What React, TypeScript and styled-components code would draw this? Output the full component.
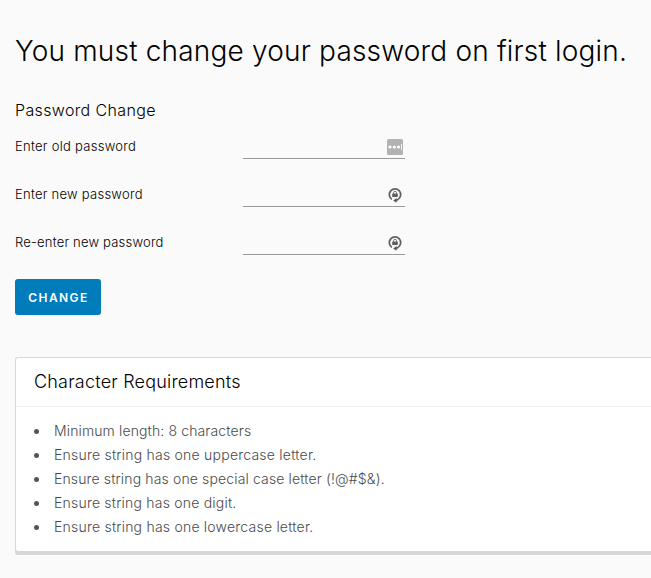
import React from "react";
import styled, { createGlobalStyle } from "styled-components";

const GlobalStyle = createGlobalStyle`
  * { box-sizing: border-box; }
  html, body { margin: 0; padding: 0; background: #fafafa; }
  body { font-family: Inter, "Liberation Sans", sans-serif; font-weight: 300; color: #000; }
`;

const Page = styled.main`
  display: flex;
  flex-direction: column;
  align-items: flex-start;
  width: 100%;
  height: 578px;
  padding: 27px 0 0 15px;
`;

const Title = styled.h1`
  margin: 0;
  font-size: 28px;
  line-height: 48px;
  font-weight: 300;
  letter-spacing: 0.19px;
  white-space: nowrap;
`;

const Form = styled.form`
  display: flex;
  flex-direction: column;
  align-items: flex-start;
  margin-top: 23px;
`;

const Legend = styled.h2`
  margin: 0 0 13px;
  font-size: 16px;
  line-height: 24px;
  font-weight: 300;
  letter-spacing: 0.36px;
`;

const Row = styled.div`
  display: flex;
  height: 24px;
  margin-bottom: 24px;
`;

const Label = styled.label<{ $tracking: number }>`
  width: 228px;
  font-size: 13px;
  line-height: 22px;
  letter-spacing: ${(p) => p.$tracking}px;
`;

const Field = styled.div`
  display: flex;
  align-items: center;
  width: 162px;
  height: 24px;
  border-bottom: 1px solid #9a9a9a;
`;

const Input = styled.input`
  flex: 1;
  min-width: 0;
  height: 22px;
  padding: 0 6px;
  border: 0;
  outline: 0;
  background: transparent;
  font: inherit;
`;

const Glyph = styled.svg`
  flex: none;
  width: 16px;
  height: 16px;
  margin-right: 2px;
`;

const Button = styled.button`
  width: 86px;
  height: 36px;
  padding: 0 0 0 1px;
  border: 0;
  border-radius: 3px;
  background: #007cbb;
  color: #fff;
  font-family: inherit;
  font-size: 12px;
  font-weight: 600;
  letter-spacing: 1.4px;
`;

const Card = styled.section`
  width: 100%;
  height: 195px;
  margin-top: 42px;
  border: 1px solid #d7d7d7;
  border-right: 0;
  border-radius: 3px 0 0 3px;
  box-shadow: 0 3px 0 #d7d7d7;
  background: #fff;
`;

const CardHeader = styled.h3`
  height: 49px;
  margin: 0;
  padding-left: 18px;
  border-bottom: 1px solid #eee;
  font-size: 18px;
  line-height: 48px;
  font-weight: 300;
  letter-spacing: 0.2px;
`;

const List = styled.ul`
  margin: 12px 0 0;
  padding: 0 0 0 18px;
  list-style: none;
`;

const Item = styled.li<{ $tracking: number }>`
  display: flex;
  align-items: center;
  height: 24px;
  font-size: 14px;
  line-height: 24px;
  letter-spacing: ${(p) => p.$tracking}px;
  color: #4a4a4a;
  &::before {
    content: "";
    width: 5px;
    height: 5px;
    margin: 1px 15px 0 0;
    border-radius: 50%;
    background: #565656;
  }
`;

const SavedIcon = () => (
  <Glyph viewBox="0 0 16 16">
    <rect width="16" height="16" rx="1.5" fill="#b2b2b2" />
    <g fill="#fff">
      <circle cx="3" cy="8" r="1.6" />
      <circle cx="7.3" cy="8" r="1.6" />
      <circle cx="11.5" cy="8" r="1.6" />
      <rect x="14" y="5" width="0.8" height="6" />
    </g>
  </Glyph>
);

const GenerateIcon = () => (
  <Glyph viewBox="0 0 16 16">
    <path d="M5 12.4A5.7 5.7 0 1 1 11 12.4L9 13.4" fill="none" stroke="#606060" strokeWidth="1.7" />
    <path d="M9.6 11V15.8L6.2 13.4Z" fill="#555" />
    <path d="M6.5 7.2V5.8a1.5 1.5 0 0 1 3 0v1.4" fill="none" stroke="#777" strokeWidth="1" />
    <rect x="5.2" y="6.6" width="5.6" height="3.4" rx="0.3" fill="#606060" />
  </Glyph>
);

const fields = [
  { id: "old", label: "Enter old password", tracking: 0.28, Icon: SavedIcon },
  { id: "new", label: "Enter new password", tracking: 0.26, Icon: GenerateIcon },
  { id: "again", label: "Re-enter new password", tracking: 0.2, Icon: GenerateIcon },
];

const requirements = [
  { text: "Minimum length: 8 characters", tracking: 0.13 },
  { text: "Ensure string has one uppercase letter.", tracking: 0.23 },
  { text: "Ensure string has one special case letter (!@#$&).", tracking: 0.14 },
  { text: "Ensure string has one digit.", tracking: 0.21 },
  { text: "Ensure string has one lowercase letter.", tracking: 0.22 },
];

export default function App() {
  return (
    <Page>
      <GlobalStyle />
      <Title>You must change your password on first login.</Title>
      <Form onSubmit={(e) => e.preventDefault()}>
        <Legend>Password Change</Legend>
        {fields.map(({ id, label, tracking, Icon }) => (
          <Row key={id}>
            <Label htmlFor={id} $tracking={tracking}>{label}</Label>
            <Field>
              <Input id={id} type="password" />
              <Icon />
            </Field>
          </Row>
        ))}
        <Button type="submit">CHANGE</Button>
      </Form>
      <Card>
        <CardHeader>Character Requirements</CardHeader>
        <List>
          {requirements.map(({ text, tracking }) => (
            <Item key={text} $tracking={tracking}>{text}</Item>
          ))}
        </List>
      </Card>
    </Page>
  );
}
